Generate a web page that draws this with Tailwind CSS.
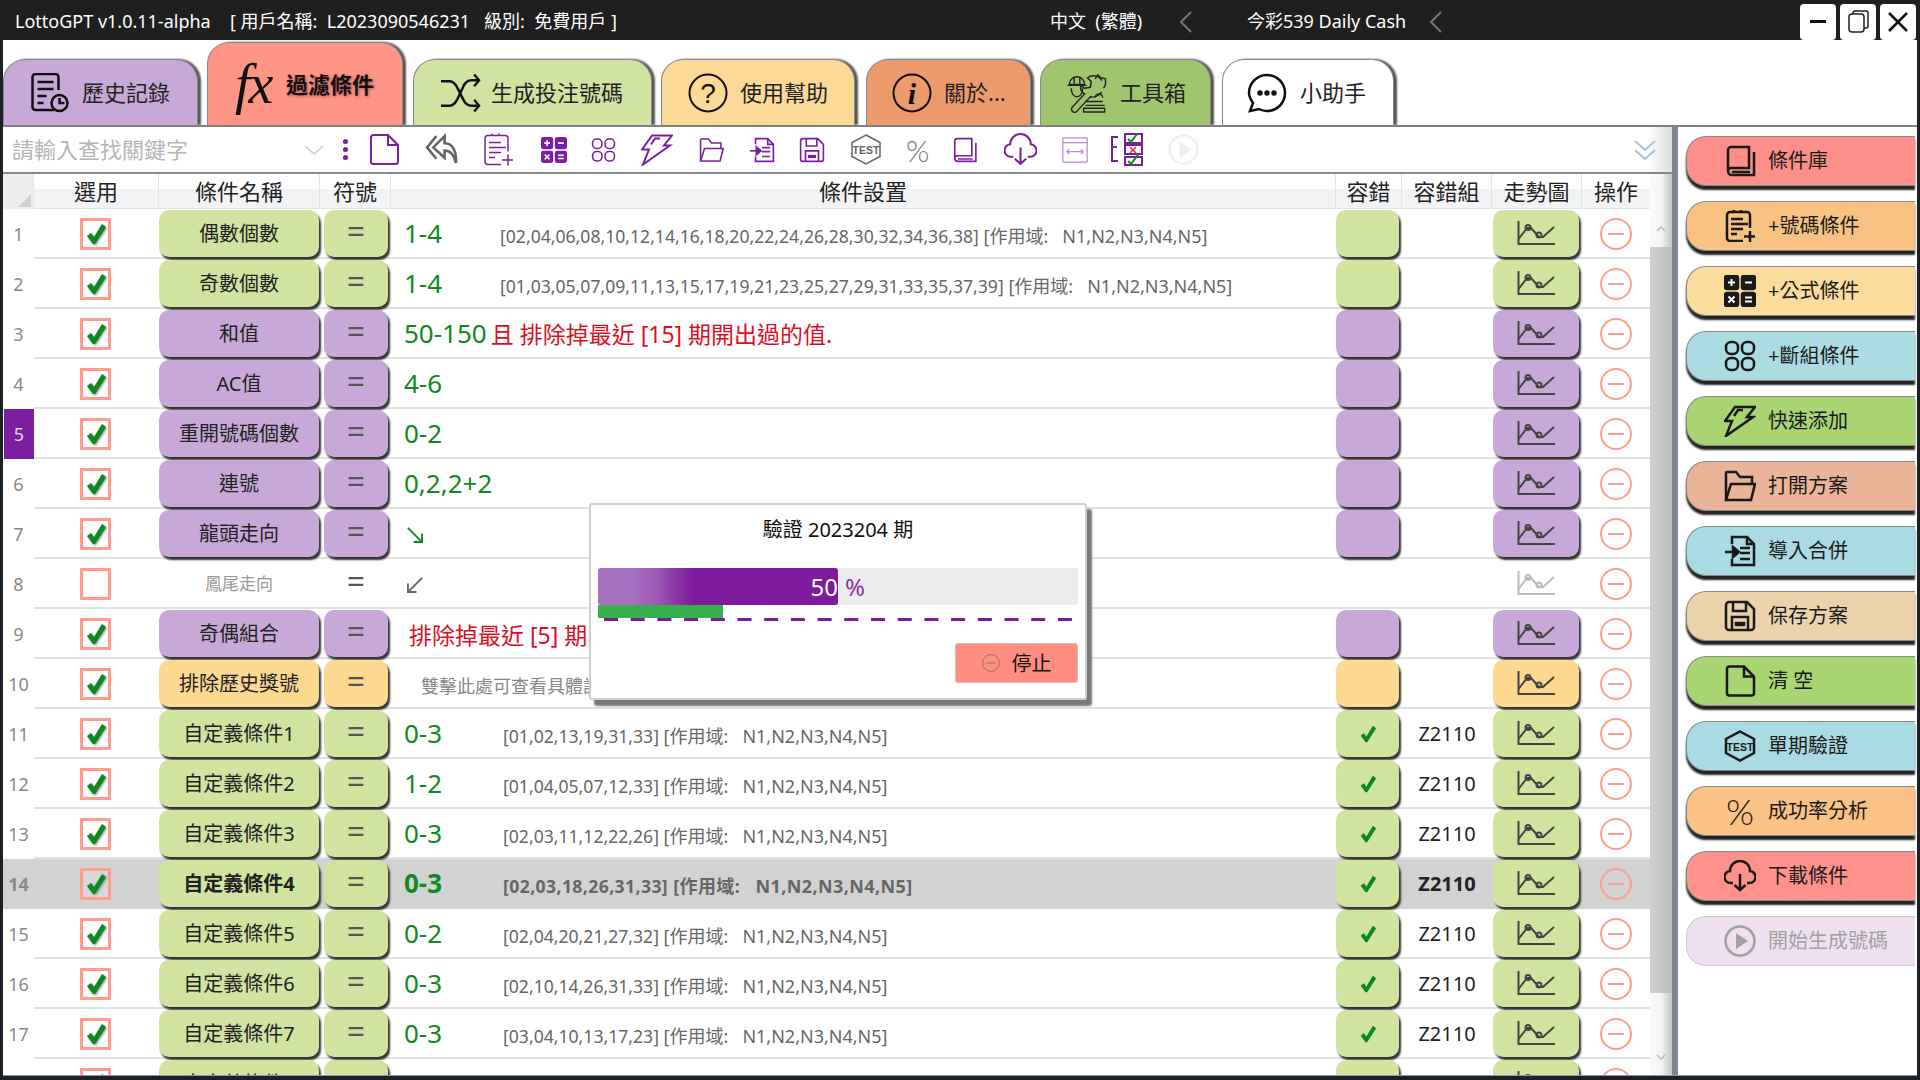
<!DOCTYPE html>
<html lang="zh-Hant">
<head>
<meta charset="UTF-8" />
<title>LottoGPT</title>
<script src="https://cdn.jsdelivr.net/npm/@tailwindcss/browser@4"></script>
</head>
<body class="w-[1920px] h-[1080px] overflow-hidden bg-[#1d2126] font-['Noto_Sans','Noto_Sans_CJK_TC',sans-serif]">

<!-- shared icons -->
<svg class="hidden">
  <symbol id="i-hist" viewBox="0 0 40 40"><path d="M25 37H6a3 3 0 0 1-3-3V4a3 3 0 0 1 3-3h20a3 3 0 0 1 3 3v13"/><path d="M8 9h16M8 16h16M8 23h9M8 30h6"/><circle cx="30" cy="30" r="8"/><path d="M30 25v5h5"/></symbol>
  <symbol id="i-shuffle" viewBox="0 0 42 40"><path d="M1 8h9c4 0 6 3 8 7l6 12c2 4 4 6 8 6h8"/><path d="M1 33h9c4 0 6-3 8-7l6-13c2-4 4-6 8-6h8"/><path d="M35 1l5 6-5 6M35 27l5 6-5 6"/></symbol>
  <symbol id="i-tools" viewBox="0 0 42 42"><path d="M3 12a8 8 0 0 1 16 0zM1 13h20M5 16c0 12 12 12 12 0M8 5v6M14 5v6"/><path d="M37 8a10 10 0 0 0-15-3l4 4-1 6-6 1-4-3c-1 4 1 7 4 9L6 36a3 3 0 0 0 5 4l14-15c4 1 9-1 12-5"/><path d="M30 6l3-4 3 3 5 1v6l-2 4"/><path d="M20 30h18M20 34h20M18 41h22v-4H18zM30 26a4 4 0 1 1 8 0"/></symbol>
  <symbol id="i-chat" viewBox="0 0 40 40"><path d="M20 2c10 0 18 8 18 18s-8 18-18 18c-3 0-6-1-8-2l-9 2 3-8c-2-3-4-6-4-10C2 10 10 2 20 2z"/><circle cx="13" cy="20" r="1.5" fill="currentColor"/><circle cx="20" cy="20" r="1.5" fill="currentColor"/><circle cx="27" cy="20" r="1.5" fill="currentColor"/></symbol>
  <symbol id="i-new" viewBox="0 0 32 32"><path d="M5 1.5h15l10 10V28a2.500 2.500 0 0 1-2.500 2.500h-22A2.500 2.500 0 0 1 3 28V4a2.500 2.500 0 0 1 2-2.500z"/><path d="M20 1.500v10h10"/></symbol>
  <symbol id="i-reply" viewBox="0 0 32 32"><path d="M11 3L2 14l9 11"/><path d="M19 3L8 14l11 10v-7c6 0 9 4 11 12 1-11-3-19-11-19z"/></symbol>
  <symbol id="i-numdoc" viewBox="0 0 32 32"><path d="M26 18V5a3 3 0 0 0-3-3H6a3 3 0 0 0-3 3v23a3 3 0 0 0 3 3h13"/><path d="M7 9h12M7 14h17M7 19h12M7 24h6M10 2V0M17 2V0"/><path d="M26 21v11M20 26.500h11"/></symbol>
  <symbol id="i-calc" viewBox="0 0 32 32"><rect x="1" y="1" width="13" height="13" rx="2" fill="currentColor"/><rect x="18" y="1" width="13" height="13" rx="2" fill="currentColor"/><rect x="1" y="18" width="13" height="13" rx="2" fill="currentColor"/><rect x="18" y="18" width="13" height="13" rx="2" fill="currentColor"/><path stroke="#fff" stroke-width="2" d="M4 7.500h7M7.500 4v7M21 7.500h7M4.500 21.500l6 6M10.500 21.500l-6 6M21 22.500h7M21 26.500h7"/></symbol>
  <symbol id="i-grid" viewBox="0 0 32 32"><rect x="2" y="2" width="12" height="12" rx="5"/><rect x="18" y="2" width="12" height="12" rx="5"/><rect x="2" y="18" width="12" height="12" rx="5"/><rect x="18" y="18" width="12" height="12" rx="5"/></symbol>
  <symbol id="i-bolt" viewBox="0 0 32 32"><path d="M11 2h20l-8 10h6L2 31l6-15H1z"/><path d="M10 11l4-6h5"/></symbol>
  <symbol id="i-folder" viewBox="0 0 32 32"><path d="M2 30V3a1 1 0 0 1 1-1h9l4 5h12v7"/><path d="M2 30l5-16h24l-4 16z"/></symbol>
  <symbol id="i-import" viewBox="0 0 32 32"><path d="M8 9V2h15l7 7v21H8v-6"/><path d="M23 2v7h7M16 13h10M16 18h10M16 24h10"/><path d="M1 17h12"/><path d="M9 12l6 5-6 5z" fill="currentColor"/></symbol>
  <symbol id="i-save" viewBox="0 0 32 32"><path d="M5 2h18l7 7v18a3 3 0 0 1-3 3H5a3 3 0 0 1-3-3V5a3 3 0 0 1 3-3z"/><path d="M9 2v9h13V2M8 30V17h16v13"/><path d="M12 23h8v2h-8z" fill="currentColor"/></symbol>
  <symbol id="i-test" viewBox="0 0 32 32"><path d="M16 1.500l14 7.500v14l-14 7.500L2 23V9z"/><text x="16" y="20.500" text-anchor="middle" font-size="10.500" font-weight="700" fill="currentColor" stroke="none" font-family="Liberation Sans">TEST</text></symbol>
  <symbol id="i-book" viewBox="0 0 32 32"><path d="M4 26V5a3 3 0 0 1 3-3h18v21H7a3 3 0 0 0-3 3 4 4 0 0 0 4 4h22V7"/><path d="M8 27h18"/></symbol>
  <symbol id="i-cloud" viewBox="0 0 32 32"><path d="M9 23H7A6 6 0 0 1 6 11a10 10 0 0 1 20 0 6 6 0 0 1-1 12h-2"/><path d="M16 14v16M10.500 25l5.500 5 5.500-5"/></symbol>
  <symbol id="i-browser" viewBox="0 0 32 32"><rect x="1" y="1" width="30" height="30" rx="1"/><path d="M1 7h30M6 18h20M9 15l-3 3 3 3M23 15l3 3-3 3"/></symbol>
  <symbol id="i-list" viewBox="0 0 33 33"><path d="M8 4H2v10h5M2 14v14h6"/><rect x="15" y="1" width="17" height="9"/><rect x="15" y="12" width="17" height="9"/><rect x="15" y="24" width="17" height="8"/><path stroke="#0a8a1e" d="M18 6l3 3 6-8M18 28l3 3 7-9"/><path stroke="#e0303a" stroke-width="1.500" d="M20 14l6 6M26 14l-6 6"/></symbol>
  <symbol id="i-play" viewBox="0 0 32 32"><circle cx="16" cy="16" r="14.500"/><path d="M12 8l12 8-12 8z" fill="currentColor" stroke="none"/></symbol>
  <symbol id="i-chart" viewBox="0 0 38 26"><path d="M1.500 1v23H38"/><path d="M1.500 19L10 8l4 0 8 9 4 0 11-10"/><circle cx="11" cy="7.500" r="2.500"/><circle cx="22" cy="15" r="2.500"/></symbol>
  <symbol id="i-minus" viewBox="0 0 32 32"><circle cx="16" cy="16" r="15"/><path d="M8 16h16"/></symbol>
  <symbol id="i-check" viewBox="0 0 20 22"><path d="M1 13l4-3 3 4L16 1l4 3L9 21h-2z" fill="currentColor" stroke="none"/></symbol>
</svg>

<div class="w-[1920px] h-[1080px] pt-[3px] px-[3px] pb-[4px] flex flex-col border-t-0">

  <!-- title bar -->
  <div class="h-[37px] bg-[#1f1f1f] text-white text-[18px] leading-[37px] flex items-center whitespace-pre shrink-0">
    <span class="ml-[12px] w-[215px]">LottoGPT v1.0.11-alpha</span>
    <span class="w-[820px]">[ 用戶名稱:  L2023090546231   級別:  免費用戶 ]</span>
    <span class="w-[129px]">中文  (繁體)</span>
    <svg class="w-[14px] h-[22px] text-[#777] fill-none stroke-current stroke-2" viewBox="0 0 14 22"><path d="M12 1L2 11l10 10"/></svg>
    <span class="ml-[54px] w-[182px]">今彩539 Daily Cash</span>
    <svg class="w-[14px] h-[22px] text-[#777] fill-none stroke-current stroke-2" viewBox="0 0 14 22"><path d="M12 1L2 11l10 10"/></svg>
    <div class="ml-auto flex gap-[4px] mr-[1px]">
      <div class="w-[36px] h-[36px] bg-white rounded-[4px] flex items-center justify-center"><div class="w-[16px] h-[3px] bg-[#111]"></div></div>
      <div class="w-[36px] h-[36px] bg-white rounded-[4px] flex items-center justify-center">
        <svg class="w-[21px] h-[23px] fill-none stroke-[#222] stroke-[1.5]" viewBox="0 0 21 23"><rect x="1" y="4" width="15" height="18" rx="3"/><path d="M5 4V3a2 2 0 0 1 2-2h11a2 2 0 0 1 2 2v13a2 2 0 0 1-2 2h-2"/></svg>
      </div>
      <div class="w-[36px] h-[36px] bg-white rounded-[4px] flex items-center justify-center">
        <svg class="w-[20px] h-[20px] fill-none stroke-[#111] stroke-[2.5]" viewBox="0 0 20 20"><path d="M1 1l18 18M19 1L1 19"/></svg>
      </div>
    </div>
  </div>

  <div class="flex-1 bg-white flex flex-col min-h-0 relative border-b border-[#8096ad]">

    <!-- tabs -->
    <div class="h-[85px] flex items-end shrink-0 text-[22px] text-[#222]">
      <div class="w-[195px] h-[66px] bg-[#c8a8d8] rounded-t-[22px] border-t border-x border-[#888] shadow-[3px_0_2px_#555] flex items-center pl-[25px] gap-[12px]">
        <svg class="w-[41px] h-[40px] fill-none stroke-[#111] stroke-[2.5]"><use href="#i-hist"/></svg><span>歷史記錄</span>
      </div>
      <div class="ml-[9px] w-[196px] h-[83px] bg-[#fe9585] rounded-t-[22px] border-t border-x border-[#888] shadow-[3px_0_2px_#555] flex items-center pl-[27px] gap-[11px]">
        <span class="font-['Liberation_Serif',serif] italic text-[56px] leading-none text-[#111] w-[40px] tracking-[-2px]">fx</span>
        <span class="font-bold text-[#111] [text-shadow:1px_1px_3px_#a55]">過濾條件</span>
      </div>
      <div class="ml-[10px] w-[239px] h-[66px] bg-[#d0e3a0] rounded-t-[22px] border-t border-x border-[#888] shadow-[3px_0_2px_#555] flex items-center pl-[26px] gap-[10px]">
        <svg class="w-[41px] h-[40px] fill-none stroke-[#111] stroke-[2.5]"><use href="#i-shuffle"/></svg><span>生成投注號碼</span>
      </div>
      <div class="ml-[9px] w-[194px] h-[66px] bg-[#fcd996] rounded-t-[22px] border-t border-x border-[#888] shadow-[3px_0_2px_#555] flex items-center pl-[26px] gap-[12px]">
        <svg class="w-[40px] h-[40px] fill-none stroke-[#111] stroke-2" viewBox="0 0 40 40"><circle cx="20" cy="20" r="18.500"/><text x="20" y="30" text-anchor="middle" font-size="28" fill="#111" stroke="none" font-family="Liberation Sans">?</text></svg><span>使用幫助</span>
      </div>
      <div class="ml-[11px] w-[165px] h-[66px] bg-[#ec9b6c] rounded-t-[22px] border-t border-x border-[#888] shadow-[3px_0_2px_#555] flex items-center pl-[25px] gap-[12px]">
        <svg class="w-[40px] h-[40px] fill-none stroke-[#111] stroke-2" viewBox="0 0 40 40"><circle cx="20" cy="20" r="18.500"/><text x="20" y="31" text-anchor="middle" font-size="30" font-weight="700" font-style="italic" fill="#111" stroke="none" font-family="Liberation Serif">i</text></svg><span>關於...</span>
      </div>
      <div class="ml-[9px] w-[171px] h-[66px] bg-[#9fc66f] rounded-t-[22px] border-t border-x border-[#888] shadow-[3px_0_2px_#555] flex items-center pl-[25px] gap-[13px]">
        <svg class="w-[41px] h-[40px] fill-none stroke-[#222] stroke-[1.5]"><use href="#i-tools"/></svg><span>工具箱</span>
      </div>
      <div class="ml-[11px] w-[172px] h-[66px] bg-white rounded-t-[22px] border-t border-x border-[#888] shadow-[3px_0_2px_#555] flex items-center pl-[24px] gap-[13px]">
        <svg class="w-[40px] h-[40px] fill-none stroke-[#111] stroke-[2.5]"><use href="#i-chat"/></svg><span>小助手</span>
      </div>
    </div>
    <div class="h-[2px] bg-[#808080] shrink-0 relative"></div>

    <div class="flex-1 flex min-h-0">
      <!-- left: toolbar and table -->
      <div class="w-[1669px] flex flex-col min-h-0">
        <div class="h-[47px] border-b-2 border-[#888] shrink-0 flex items-center relative bg-[linear-gradient(90deg,#fff_98.500%,#ddd)]">
          <span class="ml-[9px] w-[292px] text-[22px] text-[#b5b5b5] whitespace-nowrap">請輸入查找關鍵字</span>
          <svg class="w-[20px] h-[10px] fill-none stroke-[#ccc] stroke-[1.5]" viewBox="0 0 20 10"><path d="M1 1l9 8 9-8"/></svg>
          <div class="ml-[19px] w-[5px] flex flex-col gap-[3px]">
            <div class="w-[5px] h-[5px] rounded-full bg-[#7a1fa2]"></div><div class="w-[5px] h-[5px] rounded-full bg-[#7a1fa2]"></div><div class="w-[5px] h-[5px] rounded-full bg-[#7a1fa2]"></div>
          </div>
          <div class="ml-[20px] flex items-center gap-[24.500px] text-[#7a1fa2] fill-none stroke-current stroke-2">
            <svg class="w-[32px] h-[33px]"><use href="#i-new"/></svg>
            <svg class="w-[33px] h-[33px] text-[#666] stroke-[2.5]"><use href="#i-reply"/></svg>
            <svg class="w-[32px] h-[33px] stroke-[1.5]"><use href="#i-numdoc"/></svg>
            <svg class="ml-[2px] w-[26px] h-[26px]" viewBox="0 0 32 32"><use href="#i-calc"/></svg>
            <svg class="w-[25px] h-[26px]" viewBox="0 0 32 32"><use href="#i-grid"/></svg>
            <svg class="w-[32px] h-[33px]"><use href="#i-bolt"/></svg>
            <svg class="ml-[2px] w-[25px] h-[26px]" viewBox="0 0 32 32"><use href="#i-folder"/></svg>
            <svg class="w-[26px] h-[26px]" viewBox="0 0 32 32"><use href="#i-import"/></svg>
            <svg class="w-[26px] h-[26px]" viewBox="0 0 32 32"><use href="#i-save"/></svg>
            <svg class="w-[32px] h-[33px] text-[#666] stroke-[1.5]"><use href="#i-test"/></svg>
            <span class="w-[24px] text-[#777] text-[30px] leading-none font-['Lato',sans-serif] font-light stroke-0">%</span>
            <svg class="ml-[-4px] w-[27px] h-[26px]" viewBox="0 0 32 32"><use href="#i-book"/></svg>
            <svg class="ml-[2px] w-[33px] h-[33px]"><use href="#i-cloud"/></svg>
            <svg class="w-[26px] h-[26px] text-[#b987d3] stroke-[1.5]" viewBox="0 0 32 32"><use href="#i-browser"/></svg>
            <svg class="ml-[-2px] w-[33px] h-[33px]"><use href="#i-list"/></svg>
            <svg class="w-[31px] h-[31px] text-[#eee]" viewBox="0 0 32 32"><use href="#i-play"/></svg>
          </div>
          <svg class="absolute left-[1631px] top-[13px] w-[22px] h-[21px] fill-none stroke-[#a9c0e0] stroke-2" viewBox="0 0 22 21"><path d="M1 1l10 9 10-9M1 10l10 9 10-9"/></svg>
        </div>

        <div class="flex flex-1 min-h-0">
          <div class="w-[1647px] flex flex-col min-h-0">
            <!-- header -->
            <div class="h-[35px] shrink-0 grid grid-cols-[31px_125px_161px_71px_945px_66px_90px_90px_68px] text-[22px] leading-[35px] text-center text-[#222] bg-[linear-gradient(#fff_45%,#f2f3f5_45%)] border-b border-[#e4e4e4]">
              <div class="relative bg-[#eeeeee] border-r border-[#e4e4e4]"><div class="absolute right-[2px] bottom-[2px] w-0 h-0 border-b-[13px] border-l-[13px] border-b-[#cfcfcf] border-l-transparent"></div></div>
              <div class="border-r border-[#e4e4e4]">選用</div>
              <div class="border-r border-[#e4e4e4]">條件名稱</div>
              <div class="border-r border-[#e4e4e4]">符號</div>
              <div class="border-r border-[#e4e4e4]">條件設置</div>
              <div class="border-r border-[#e4e4e4]">容錯</div>
              <div class="border-r border-[#e4e4e4]">容錯組</div>
              <div class="border-r border-[#e4e4e4]">走勢圖</div>
              <div>操作</div>
            </div>
            <div id="rows" class="flex-1 min-h-0 overflow-hidden"></div>
          </div>
          <!-- scrollbar -->
          <div class="w-[22px] relative bg-[linear-gradient(90deg,#fafafa,#f5f5f5_50%,#c4c4c4)]">
            <svg class="absolute left-[6px] top-[52px] w-[10px] h-[6px] fill-none stroke-[#bbb] stroke-[1.5]" viewBox="0 0 10 6"><path d="M1 5l4-4 4 4"/></svg>
            <div class="absolute left-0 right-0 top-[73px] h-[746px] bg-[linear-gradient(90deg,#cfcfcf,#bdbdbd)]"></div>
            <svg class="absolute left-[6px] bottom-[15px] w-[10px] h-[6px] fill-none stroke-[#bbb] stroke-[1.5]" viewBox="0 0 10 6"><path d="M1 1l4 4 4-4"/></svg>
          </div>
        </div>
      </div>

      <!-- splitter -->
      <div class="w-[6px] bg-[#7f8690]"></div>

      <!-- right buttons -->
      <div id="side" class="flex-1 pt-[9px] pl-[8px] pr-[2px] flex flex-col gap-[15px]"></div>
    </div>

    <!-- progress dialog -->
    <div class="absolute left-[586px] top-[463px] w-[498px] h-[197px] bg-white border-2 border-[#cfcfcf] rounded-[3px] shadow-[5px_6px_2px_#777] px-[7px]">
      <div class="h-[50px] mb-[13px] text-[20px] leading-[50px] text-center text-[#111] whitespace-pre">驗證 2023204 期</div>
      <div class="h-[37px] bg-[#ebebeb] rounded-[3px] flex items-center text-[24px] leading-none">
        <div class="w-[240px] h-[37px] rounded-[3px] bg-[linear-gradient(90deg,#a870bf_0,#a870bf_15%,#9a56b4_25%,#7d1b9c_40%,#7d1b9c_100%)] text-white text-right leading-[37px]">50</div>
        <span class="ml-[7px] text-[#8e2cb2]">%</span>
      </div>
      <div class="w-[125px] h-[13px] bg-[#36b04a]"></div>
      <svg class="block w-[480px] h-[3px]" viewBox="0 0 480 3"><line x1="6" y1="1.500" x2="480" y2="1.500" stroke="#7d1b9c" stroke-width="3" stroke-dasharray="14 12.700"/></svg>
      <div class="mt-[22px] ml-[357px] w-[123px] h-[40px] bg-[#fe8f80] border border-[#e8b8b0] rounded-[3px] flex items-center justify-center gap-[12px] text-[20px] text-[#111]">
        <svg class="w-[18px] h-[18px] fill-none stroke-[#8a6a66] stroke-[1.500]"><use href="#i-minus"/></svg><span class="pt-[2px]">停止</span>
      </div>
    </div>
  </div>
</div>

<script>
  const tones = { g: 'bg-[#d0e4a0]', p: 'bg-[#c8a8d8]', o: 'bg-[#fcd890]' };
  const rows = [
    { name: '偶數個數', tone: 'g', val: '1-4', list: '[02,04,06,08,10,12,14,16,18,20,22,24,26,28,30,32,34,36,38]', w: 'w-[96px]' },
    { name: '奇數個數', tone: 'g', val: '1-4', list: '[01,03,05,07,09,11,13,15,17,19,21,23,25,27,29,31,33,35,37,39]', w: 'w-[96px]' },
    { name: '和值', tone: 'p', val: '50-150', red: '且 排除掉最近 [15] 期開出過的值.' },
    { name: 'AC值', tone: 'p', val: '4-6' },
    { name: '重開號碼個數', tone: 'p', val: '0-2', mark: true },
    { name: '連號', tone: 'p', val: '0,2,2+2' },
    { name: '龍頭走向', tone: 'p', arrow: 'down' },
    { name: '鳳尾走向', off: true, arrow: 'up' },
    { name: '奇偶組合', tone: 'p', redOnly: '排除掉最近 [5] 期開出過的值.' },
    { name: '排除歷史獎號', tone: 'o', note: '雙擊此處可查看具體設置' },
    { name: '自定義條件1', tone: 'g', val: '0-3', list: '[01,02,13,19,31,33]', z: true },
    { name: '自定義條件2', tone: 'g', val: '1-2', list: '[01,04,05,07,12,33]', z: true },
    { name: '自定義條件3', tone: 'g', val: '0-3', list: '[02,03,11,12,22,26]', z: true },
    { name: '自定義條件4', tone: 'g', val: '0-3', list: '[02,03,18,26,31,33]', z: true, sel: true },
    { name: '自定義條件5', tone: 'g', val: '0-2', list: '[02,04,20,21,27,32]', z: true },
    { name: '自定義條件6', tone: 'g', val: '0-3', list: '[02,10,14,26,31,33]', z: true },
    { name: '自定義條件7', tone: 'g', val: '0-3', list: '[03,04,10,13,17,23]', z: true },
    { name: '自定義條件8', tone: 'g', val: '1-2', z: true, cut: true }
  ];

  const shadow = 'shadow-[2px_3px_2px_#333]';
  const btn = 'h-[47px] mt-[1px] rounded-[10px] flex items-center justify-center';

  function configCell(r) {
    if (r.arrow === 'down') return '<svg class="ml-[16px] mt-[4px] w-[16px] h-[16px] fill-none stroke-[#0e8a1e] stroke-2" viewBox="0 0 17 17"><path d="M1 1l15 15M7 16h9V7"/></svg>';
    if (r.arrow === 'up') return '<svg class="ml-[16px] mt-[4px] w-[16px] h-[16px] fill-none stroke-[#666] stroke-2" viewBox="0 0 17 17"><path d="M16 1L1 16M1 7v9h9"/></svg>';
    if (r.redOnly) return '<span class="ml-[18px] mt-[5px] text-[23px] text-[#e00d1f]">' + r.redOnly + '</span>';
    if (r.note) return '<span class="ml-[30px] mt-[6px] text-[18px] text-[#888]">' + r.note + '</span>';
    let html = '<span class="ml-[13px] text-[26px] text-[#0e8a1e] ' + (r.list ? (r.w || 'w-[99px]') : '') + '">' + r.val + '</span>';
    if (r.red) html += '<span class="ml-[4px] mt-[2px] text-[23px] text-[#e00d1f]">' + r.red + '</span>';
    if (r.list) {
      html += '<span class="mt-[7px] text-[#666] ' + (r.sel ? 'tracking-[0.4px]' : '') + '"><span class="text-[17.600px]">' + r.list + '</span>' +
        '<span class="text-[18px]"> [作用域:   N1,N2,N3,N4,N5]</span></span>';
    }
    return html;
  }

  document.getElementById('rows').innerHTML = rows.map((r, i) => {
    const tone = r.off ? '' : tones[r.tone];
    const raised = r.off ? '' : shadow;
    const line = 'h-[50px] border-b-2 ' + (r.sel ? 'border-transparent' : 'border-[#e2e2e2]');
    const num = r.mark ? 'bg-[#7b1fa2] text-[#ddd] h-[49px] ml-[1px]' : 'text-[#888]';
    return '<div class="grid grid-cols-[31px_125px_161px_71px_945px_66px_90px_90px_68px] h-[50px] ' + (r.sel ? 'bg-[#d2d2d2] font-bold' : '') + '">' +
      '<div class="h-[50px] flex items-center justify-center text-[18px] ' + num + '">' + (i + 1) + '</div>' +
      '<div class="' + line + ' flex items-start justify-center pr-[2px]"><div class="mt-[9px] w-[31px] h-[32px] border-[3px] border-[#ff9c8e] ' + (r.sel ? 'bg-[#d8d8d8]' : 'bg-white') + ' flex items-center justify-center text-[#0a8a1e]">' +
        (r.off ? '' : '<svg class="w-[20px] h-[22px] drop-shadow-[1px_1px_1px_#888]"><use href="#i-check"/></svg>') + '</div></div>' +
      '<div class="' + line + '"><div class="w-[160px] ' + btn + ' ' + raised + ' ' + tone + (r.off ? ' text-[17px] text-[#999]' : ' text-[20px] text-[#222]') + '">' + r.name + '</div></div>' +
      '<div class="' + line + '"><div class="ml-[4px] w-[64px] ' + btn + ' ' + raised + ' ' + tone + ' font-normal text-[32px] text-[#555] leading-none pb-[5px]">=</div></div>' +
      '<div class="' + line + ' flex items-center whitespace-pre">' + configCell(r) + '</div>' +
      '<div class="' + line + '">' + (r.off ? '' : '<div class="w-[63px] ' + btn + ' ' + raised + ' ' + tone + ' text-[#0a8a1e]">' + (r.z ? '<svg class="w-[18px] h-[18px]"><use href="#i-check"/></svg>' : '') + '</div>') + '</div>' +
      '<div class="' + line + ' flex items-center justify-center pt-[2px] text-[20px] text-[#222]">' + (r.z && !r.cut ? 'Z2110' : '') + '</div>' +
      '<div class="' + line + '"><div class="ml-[1px] w-[86px] ' + btn + ' ' + raised + ' ' + tone + '">' +
        '<svg class="mb-[2px] w-[38px] h-[26px] fill-none stroke-2 ' + (r.off ? 'stroke-[#bbb]' : 'stroke-[#444]') + '"><use href="#i-chart"/></svg></div></div>' +
      '<div class="' + line + ' flex items-start justify-center"><svg class="mt-[9px] w-[32px] h-[32px] fill-none stroke-[#ff9c8e] stroke-2"><use href="#i-minus"/></svg></div>' +
    '</div>';
  }).join('');

  const sideButtons = [
    ['條件庫', 'bg-[#fe8f88]', 'i-book'],
    ['+號碼條件', 'bg-[#f8c282]', 'i-numdoc'],
    ['+公式條件', 'bg-[#fcdc9c]', 'i-calc'],
    ['+斷組條件', 'bg-[#abdbe3]', 'i-grid'],
    ['快速添加', 'bg-[#a8d474]', 'i-bolt'],
    ['打開方案', 'bg-[#e9b497]', 'i-folder'],
    ['導入合併', 'bg-[#a8dbe3]', 'i-import'],
    ['保存方案', 'bg-[#ecd2ab]', 'i-save'],
    ['清 空', 'bg-[#a8d673]', 'i-new'],
    ['單期驗證', 'bg-[#a8dbe3]', 'i-test'],
    ['成功率分析', 'bg-[#fbc286]', ''],
    ['下載條件', 'bg-[#fe918a]', 'i-cloud'],
    ['開始生成號碼', 'bg-[#eee0ef]', 'i-play']
  ];

  document.getElementById('side').innerHTML = sideButtons.map(([label, bg, icon], i) => {
    const off = i === 12;
    const look = off
      ? 'border-[#ccc] text-[#a0a0a0]'
      : 'border-[#888] text-[#1a1a1a] shadow-[0_4px_2px_#222]';
    const glyph = icon
      ? '<svg class="w-[32px] h-[32px] fill-none stroke-current stroke-[2.500]" viewBox="0 0 32 32"><use href="#' + icon + '"/></svg>'
      : "<span class=\"w-[32px] text-[36px] leading-none text-center font-['Lato',sans-serif] font-light\">%</span>";
    return '<div class="h-[50px] shrink-0 w-[229px] pl-[37px] gap-[12px] flex items-center rounded-l-[20px] border border-r-0 text-[20px] whitespace-pre ' + bg + ' ' + look + '">' + glyph + '<span>' + label + '</span></div>';
  }).join('');
</script>

</body>
</html>
